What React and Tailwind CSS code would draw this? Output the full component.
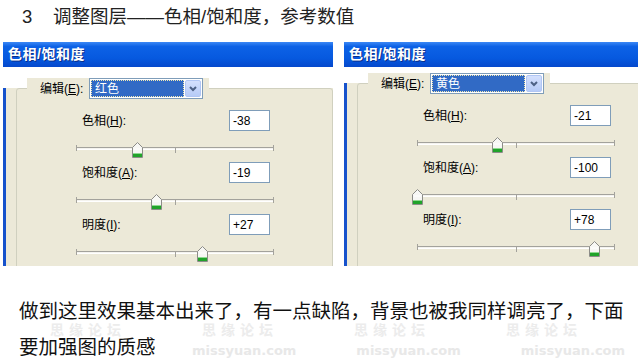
const cjk = { fontFamily: '"Liberation Sans", "Noto Sans CJK SC", sans-serif' };

const leftRows = [
  { name: '色相', key: 'H', val: '-38', pos: 61 },
  { name: '饱和度', key: 'A', val: '-19', pos: 80 },
  { name: '明度', key: 'I', val: '+27', pos: 126 },
];

const rightRows = [
  { name: '色相', key: 'H', val: '-21', pos: 80 },
  { name: '饱和度', key: 'A', val: '-100', pos: 0 },
  { name: '明度', key: 'I', val: '+78', pos: 177 },
];

function Thumb() {
  return (
    <svg width="11" height="16" viewBox="0 0 11 16">
      <path d="M5.5 0.5 L10.5 5.5 L10.5 15.5 L0.5 15.5 L0.5 5.5 Z" fill="#f7f7f4" stroke="#8c8c88" />
      <path d="M2 7 L9 7" stroke="#ffffff" />
      <rect x="1" y="12" width="9" height="3" fill="#21a32a" />
      <rect x="1" y="11" width="9" height="1" fill="#8fd98f" />
    </svg>
  );
}

function Slider({ pos }) {
  return (
    <div className="relative w-[198px] ml-[59px] h-[16px] pt-[4px]">
      <div className="h-[3px] border-t border-[#a3a29c] bg-[#f4f3ee] border-b border-b-white rounded-[1px]" />
      <div className="absolute left-0 top-[2px] w-px h-[6px] bg-[#a3a29c]" />
      <div className="absolute left-[99px] top-[4px] w-px h-[6px] bg-[#a3a29c]" />
      <div className="absolute right-0 top-[2px] w-px h-[6px] bg-[#a3a29c]" />
      <div className="absolute top-[-1px]" style={{ left: pos - 5 }}>
        <Thumb />
      </div>
    </div>
  );
}

function Row({ row }) {
  return (
    <div className="h-[52px]">
      <div className="flex items-center h-[21px]">
        <div className="w-[212px] pl-[65px] text-[12px] text-black">
          {row.name}(<span className="underline">{row.key}</span>):
        </div>
        <div className="w-[41px] h-[21px] bg-white border border-[#7f9db9] flex items-center pl-[3px] text-[12px] text-black">
          {row.val}
        </div>
      </div>
      <div className="mt-[12px]">
        <Slider pos={row.pos} />
      </div>
    </div>
  );
}

function Dialog({ width, sel, rows, gbTop }) {
  return (
    <div className={`${width} h-[224px] overflow-hidden shrink-0`} style={cjk}>
      <div className="w-[345px] h-[25px] flex items-center pl-[5px] bg-[linear-gradient(to_bottom,#3b88f5_0%,#0d62e6_18%,#0659df_65%,#0548cc_100%)]">
        <span className="text-white text-[14px] font-bold tracking-[0.5px] [text-shadow:1px_1px_0_#0a2f8a]">色相/饱和度</span>
      </div>
      <div className="w-[345px] h-[199px] bg-[#ece9d8] border-l-[3px] border-[#1652cc] pl-[10px]">
        <div className={`${gbTop} w-[317px] h-[260px] border border-[#d0d0bf] rounded-[3px]`}>
          <div className="-mt-[11px] ml-[10px] pl-[13px] pr-[6px] w-fit flex items-center bg-[#ece9d8]">
            <div className="w-[49px] text-[12px] text-black">
              编辑(<span className="underline">E</span>):
            </div>
            <div className="w-[114px] h-[21px] bg-white border border-[#7f9db9] p-[1px] flex">
              <div className="flex-1 bg-[#316ac5] border border-dotted border-[#f2e9b0] flex items-center pl-[3px] text-white text-[12px]">
                {sel}
              </div>
              <div className="w-[16px] ml-[1px] rounded-[2px] bg-[linear-gradient(to_bottom,#d4e0fd,#b6cbf7)] border border-[#b1c6f4] flex items-center justify-center">
                <svg width="8" height="6" viewBox="0 0 8 6">
                  <path d="M1 1 L4 4 L7 1" stroke="#4d6185" strokeWidth="2" fill="none" />
                </svg>
              </div>
            </div>
          </div>
          <div className="mt-[11px]">
            {rows.map((r) => (
              <Row key={r.name} row={r} />
            ))}
          </div>
        </div>
      </div>
    </div>
  );
}

export default function App() {
  return (
    <div className="w-[638px] h-[361px] bg-white relative overflow-hidden">
      {/* faint site watermark lying over the text */}
      <div className="absolute top-[322px] left-0 w-full flex flex-col gap-[5px] pointer-events-none">
        <div className="flex pl-[50px] gap-[76px] text-[14px] leading-[16px] font-bold text-[#ececec] tracking-[5px]" style={cjk}>
          <span>思缘论坛</span>
          <span>思缘论坛</span>
          <span>思缘论坛</span>
          <span>思缘论坛</span>
        </div>
        <div className="flex pl-[192px] gap-[60px] text-[13px] leading-[16px] font-bold text-[#e8e8e8]" style={{ fontFamily: '"DejaVu Sans", sans-serif' }}>
          <span>missyuan.com</span>
          <span>missyuan.com</span>
          <span>missyuan.com</span>
        </div>
      </div>

      <div className="relative h-[42px] pt-[4px] pl-[22px] flex text-[18.5px] leading-[26px] text-[#222]" style={cjk}>
        <span className="w-[31px]">3</span>
        <span>调整图层——色相/饱和度，参考数值</span>
      </div>

      <div className="relative flex pl-[3px] gap-[11px]">
        <Dialog width="w-[330px]" sel="红色" rows={leftRows} gbTop="mt-[21px]" />
        <Dialog width="w-[294px]" sel="黄色" rows={rightRows} gbTop="mt-[16px]" />
      </div>

      <div className="relative mt-[27px] pl-[19px] w-[630px] text-[19.5px] leading-[36px] text-[#111]" style={cjk}>
        做到这里效果基本出来了，有一点缺陷，背景也被我同样调亮了，下面要加强图的质感
      </div>
    </div>
  );
}
